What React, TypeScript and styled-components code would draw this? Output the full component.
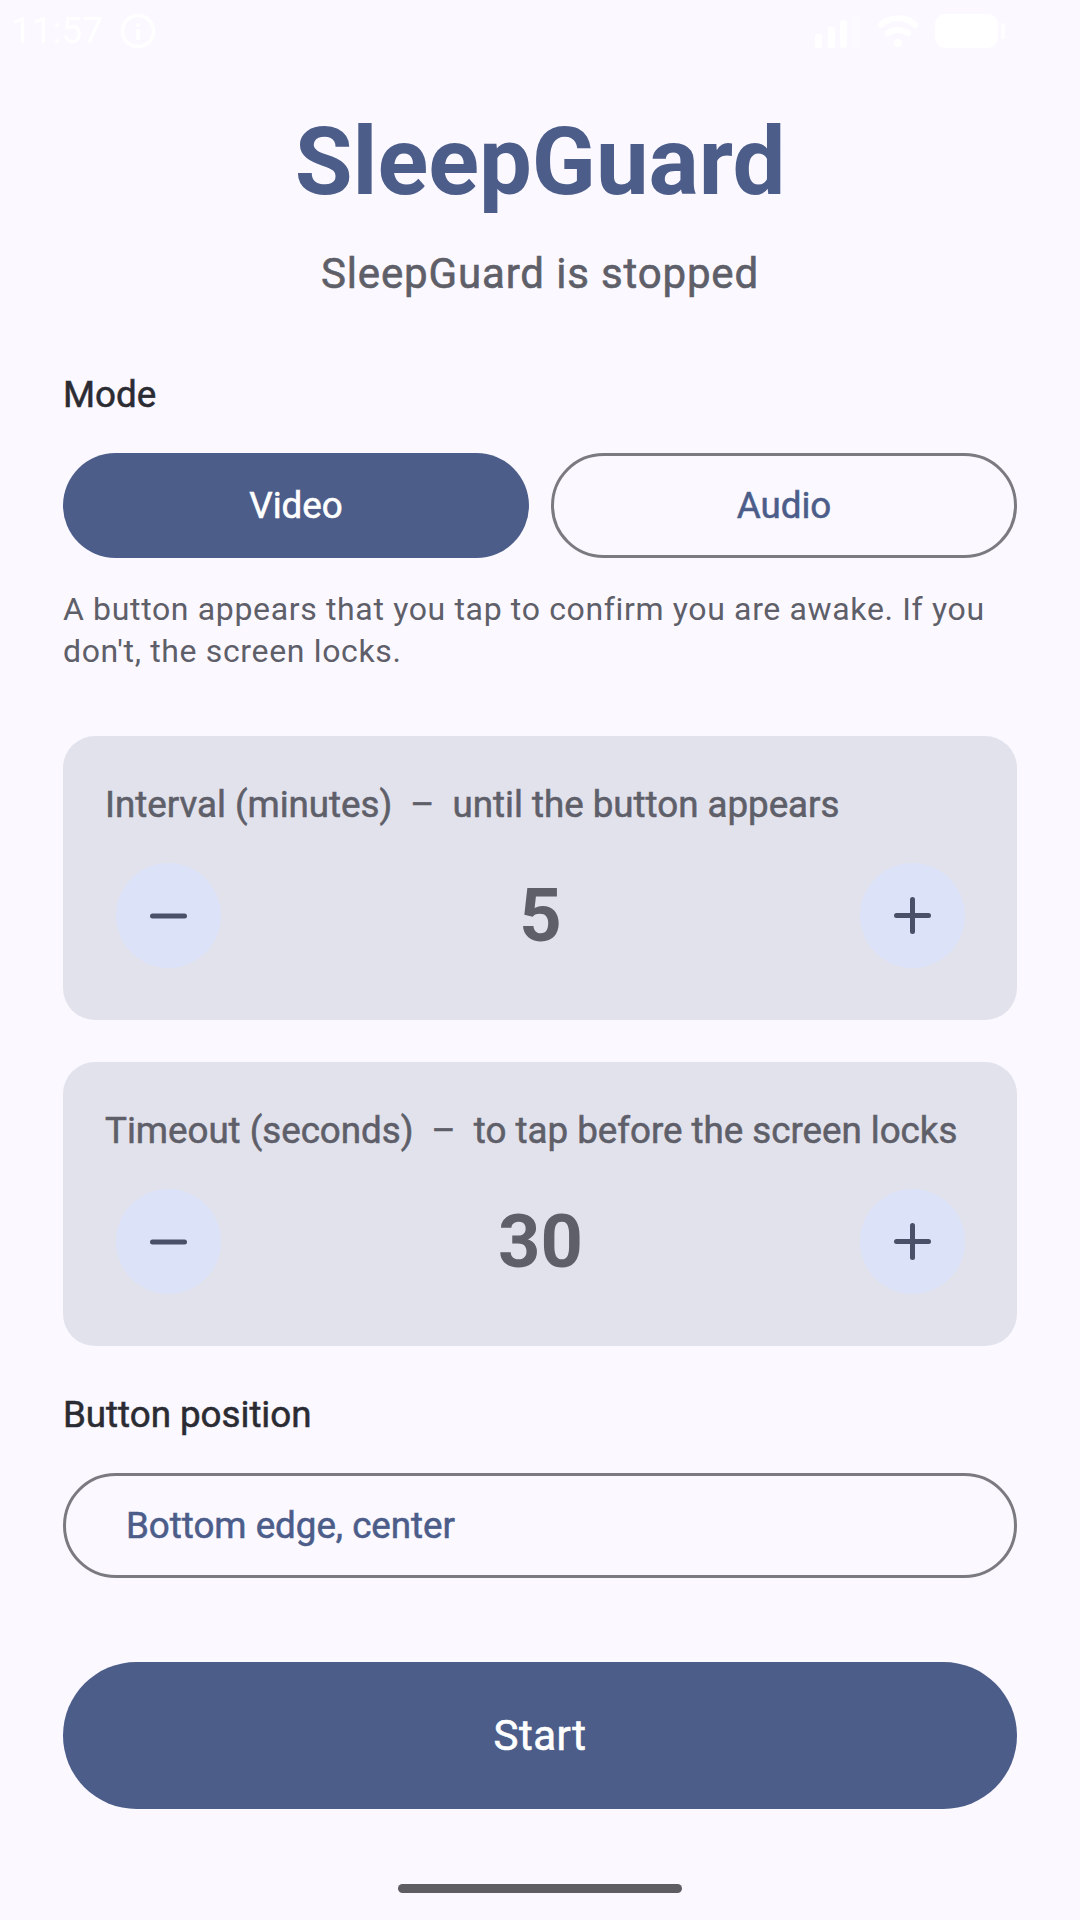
import React from 'react';
import styled, { createGlobalStyle, css } from 'styled-components';

const GlobalStyle = createGlobalStyle`
  html, body {
    margin: 0;
    padding: 0;
    background: #fbf8ff;
  }
  * {
    box-sizing: border-box;
  }
`;

// the device's Roboto medium sits between the installed regular and medium cuts
const labelText = css`
  font-size: 36.75px;
  font-weight: 400;
  letter-spacing: -0.03px;
  -webkit-text-stroke: 0.55px currentColor;
`;

const Screen = styled.div`
  width: 1080px;
  height: 1920px;
  background: #fbf8ff;
  font-family: Roboto, "Noto Sans", sans-serif;
  display: flex;
  flex-direction: column;
  overflow: hidden;
`;

const StatusBar = styled.div`
  height: 62px;
  padding: 0 75px 0 11px;
  display: flex;
  align-items: center;
  justify-content: space-between;
  color: #ffffff;
`;

const StatusLeft = styled.div`
  display: flex;
  align-items: center;
  gap: 17px;
`;

const Clock = styled.span`
  font-size: 37px;
  line-height: 60px;
`;

const StatusRight = styled.div`
  display: flex;
  align-items: center;
  gap: 15px;
`;

const Content = styled.main`
  flex: 1;
  padding: 0 63px;
  display: flex;
  flex-direction: column;
`;

const Title = styled.h1`
  margin: 50px 0 0;
  font-size: 94px;
  line-height: 100px;
  font-weight: 700;
  color: #4c5d8a;
  text-align: center;
`;

const Status = styled.p`
  margin: 37px 0 0;
  font-size: 42px;
  line-height: 50px;
  font-weight: 400;
  letter-spacing: 0.85px;
  -webkit-text-stroke: 0.6px currentColor;
  color: #5e5f69;
  text-align: center;
`;

const SectionLabel = styled.div<{ $top: number }>`
  margin-top: ${p => p.$top}px;
  ${labelText}
  line-height: 44px;
  color: #2b2c33;
`;

const ModeRow = styled.div`
  margin-top: 36px;
  display: grid;
  grid-template-columns: 1fr 1fr;
  gap: 22px;
`;

const ModeButton = styled.button<{ $active?: boolean }>`
  height: 105px;
  border-radius: 53px;
  border: ${p => (p.$active ? 'none' : '3px solid #7a7a80')};
  background: ${p => (p.$active ? '#4c5d8a' : 'transparent')};
  color: ${p => (p.$active ? '#ffffff' : '#4c5d8a')};
  font-family: inherit;
  ${labelText}
  padding: 0;
`;

const Helper = styled.p`
  margin: 30px 0 0;
  font-size: 32px;
  line-height: 42px;
  letter-spacing: 0.65px;
  color: #5e5f69;
`;

const Card = styled.section<{ $top: number }>`
  margin-top: ${p => p.$top}px;
  height: 284px;
  padding: 47px 42px 0;
  border-radius: 32px;
  background: #e2e2ed;
`;

const CardLabel = styled.div`
  ${labelText}
  line-height: 44px;
  color: #5e5f69;
  white-space: pre;
`;

const Stepper = styled.div`
  margin-top: 36px;
  display: flex;
  align-items: center;
  justify-content: space-between;
  padding: 0 10px 0 11px;
`;

const StepButton = styled.button`
  width: 105px;
  height: 105px;
  border: none;
  border-radius: 50%;
  padding: 0;
  background: #dce2f8;
  display: flex;
  align-items: center;
  justify-content: center;
`;

const StepValue = styled.span`
  font-size: 74px;
  line-height: 105px;
  font-weight: 700;
  color: #5e5f69;
`;

const Dropdown = styled.button`
  margin-top: 36px;
  height: 105px;
  border-radius: 53px;
  border: 3px solid #7a7a80;
  background: transparent;
  padding: 0 0 0 60px;
  text-align: left;
  font-family: inherit;
  ${labelText}
  color: #4c5d8a;
`;

const StartButton = styled.button`
  margin-top: 84px;
  height: 147px;
  border: none;
  border-radius: 74px;
  background: #4c5d8a;
  color: #ffffff;
  font-family: inherit;
  font-size: 42px;
  font-weight: 400;
  letter-spacing: 0.5px;
  -webkit-text-stroke: 0.6px currentColor;
  padding: 0;
`;

const NavBar = styled.div`
  height: 55px;
  display: flex;
  justify-content: center;
  padding-top: 19px;
`;

const HomeHandle = styled.div`
  width: 284px;
  height: 9px;
  border-radius: 5px;
  background: #5e5e62;
`;

const InfoIcon = () => (
  <svg width="36" height="36" viewBox="0 0 36 36" fill="none">
    <circle cx="18" cy="18" r="15.5" stroke="#fff" strokeWidth="3.5" />
    <rect x="16" y="10" width="4" height="4" rx="2" fill="#fff" />
    <rect x="16" y="16" width="4" height="11" fill="#fff" />
  </svg>
);

const SignalIcon = () => (
  <svg width="46" height="33" viewBox="0 0 46 33" fill="#fff">
    <rect x="0" y="19" width="7" height="14" rx="3" />
    <rect x="13" y="12" width="7" height="21" rx="3" />
    <rect x="25" y="5" width="7" height="28" rx="3" />
    <rect x="38" y="0" width="7" height="33" rx="3" opacity="0.35" />
  </svg>
);

const WifiIcon = () => (
  <svg width="44" height="32" viewBox="0 0 44 32" fill="none" stroke="#fff" strokeWidth="6" strokeLinecap="round">
    <path d="M5 10 C14 1 30 1 39 10" />
    <path d="M12 18 C18 14 26 14 32 18" />
    <circle cx="22" cy="28" r="4" fill="#fff" stroke="none" />
  </svg>
);

const BatteryIcon = () => (
  <svg width="70" height="34" viewBox="0 0 70 34" fill="#fff">
    <rect x="0" y="0" width="63" height="34" rx="10" />
    <rect x="66" y="9" width="4" height="16" rx="1.5" opacity="0.7" />
  </svg>
);

const MinusIcon = () => (
  <svg width="37" height="6" viewBox="0 0 37 6">
    <rect x="0" y="0.5" width="37" height="5" rx="2.5" fill="#4a5068" />
  </svg>
);

const PlusIcon = () => (
  <svg width="37" height="37" viewBox="0 0 37 37">
    <rect x="0" y="16" width="37" height="5" rx="2.5" fill="#4a5068" />
    <rect x="16" y="0" width="5" height="37" rx="2.5" fill="#4a5068" />
  </svg>
);

interface StepperCardProps {
  label: string;
  value: number;
  top: number;
}

const StepperCard = ({ label, value, top }: StepperCardProps) => (
  <Card $top={top}>
    <CardLabel>{label}</CardLabel>
    <Stepper>
      <StepButton aria-label="decrease"><MinusIcon /></StepButton>
      <StepValue>{value}</StepValue>
      <StepButton aria-label="increase"><PlusIcon /></StepButton>
    </Stepper>
  </Card>
);

export default function App() {
  return (
    <Screen>
      <GlobalStyle />
      <StatusBar>
        <StatusLeft>
          <Clock>11:57</Clock>
          <InfoIcon />
        </StatusLeft>
        <StatusRight>
          <SignalIcon />
          <WifiIcon />
          <BatteryIcon />
        </StatusRight>
      </StatusBar>
      <Content>
        <Title>SleepGuard</Title>
        <Status>SleepGuard is stopped</Status>
        <SectionLabel $top={74}>Mode</SectionLabel>
        <ModeRow>
          <ModeButton $active>Video</ModeButton>
          <ModeButton>Audio</ModeButton>
        </ModeRow>
        <Helper>A button appears that you tap to confirm you are awake. If you don't, the screen locks.</Helper>
        <StepperCard top={64} label="Interval (minutes)  –  until the button appears" value={5} />
        <StepperCard top={42} label="Timeout (seconds)  –  to tap before the screen locks" value={30} />
        <SectionLabel $top={47}>Button position</SectionLabel>
        <Dropdown>Bottom edge, center</Dropdown>
        <StartButton>Start</StartButton>
      </Content>
      <NavBar>
        <HomeHandle />
      </NavBar>
    </Screen>
  );
}
